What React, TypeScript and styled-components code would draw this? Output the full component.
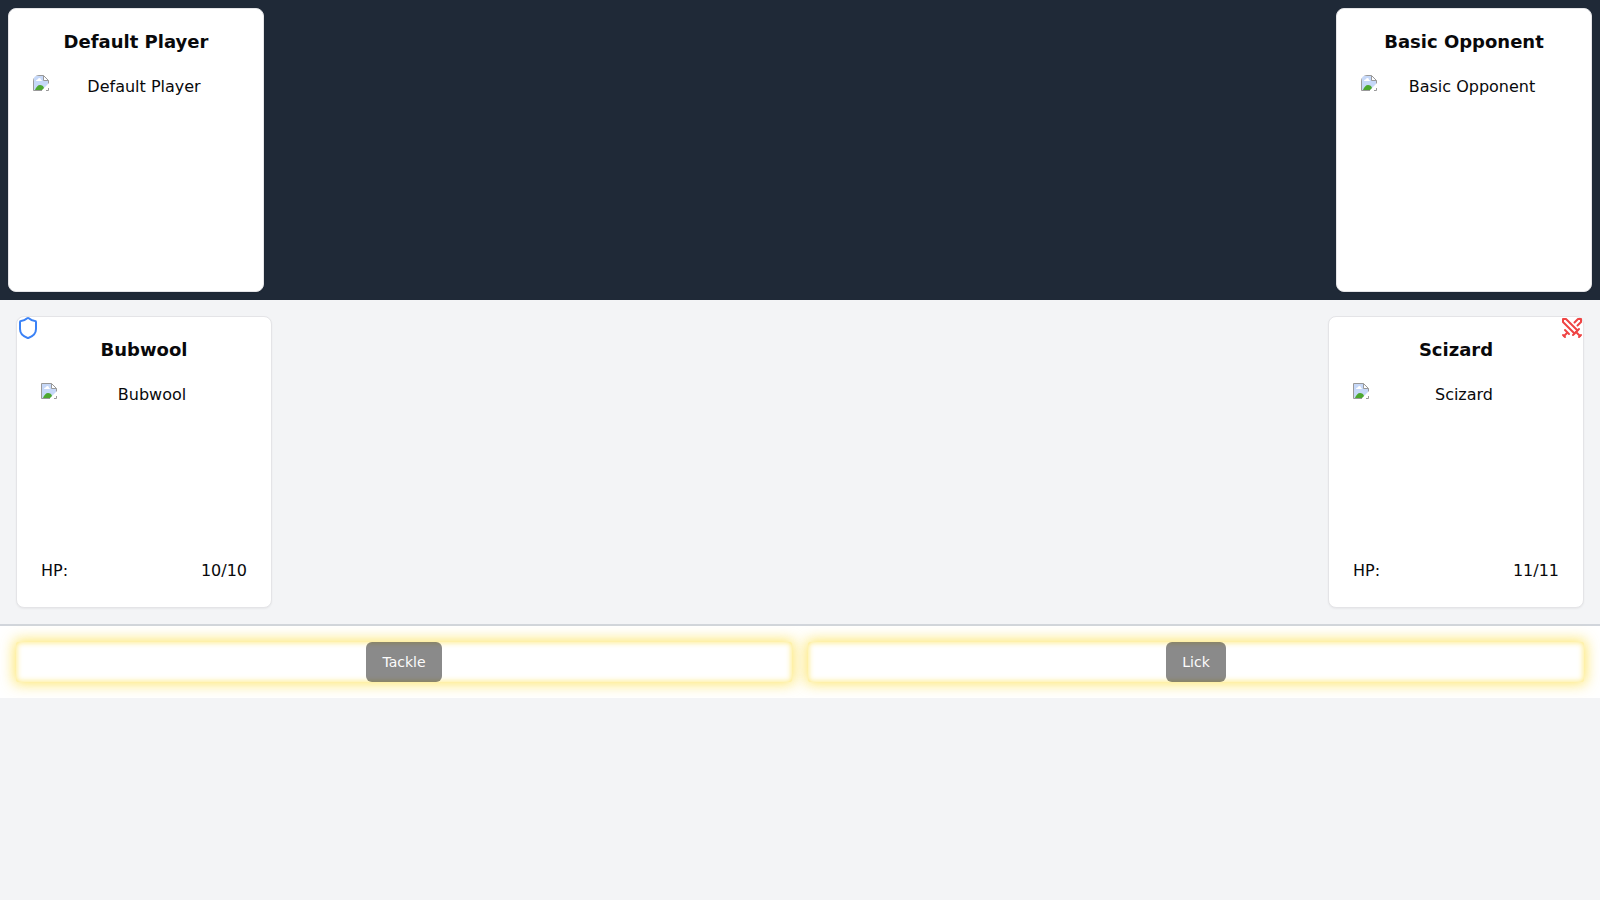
import React from "react";
import styled, { createGlobalStyle } from "styled-components";
import { Shield, Swords } from "lucide-react";

const GlobalStyle = createGlobalStyle`
  *, *::before, *::after { box-sizing: border-box; }
  body {
    margin: 0;
    background: #f3f4f6;
    color: #09090b;
    font: 16px/24px "DejaVu Sans", sans-serif;
  }
`;

const TrainerBar = styled.header`
  display: flex;
  justify-content: space-between;
  padding: 8px;
  background: #1f2937;
`;

const Arena = styled.main`
  display: flex;
  justify-content: space-between;
  padding: 16px;
  border-bottom: 2px solid #d1d5db;
`;

const Card = styled.article`
  width: 256px;
  padding: 24px;
  background: #fff;
  border: 1px solid #e4e4e7;
  border-radius: 8px;
  box-shadow: 0 1px 2px rgba(0, 0, 0, 0.05);
`;

const CardTitle = styled.h2`
  margin: 0 0 24px;
  font-size: 18px;
  line-height: 18px;
  font-weight: 700;
  text-align: center;
`;

const Portrait = styled.div<{ $height: number; $radius?: number }>`
  display: flex;
  height: ${(p) => p.$height}px;
  border-radius: ${(p) => p.$radius ?? 0}px;
  overflow: hidden;
`;

const PortraitLabel = styled.span`
  flex: 1;
  text-align: center;
`;

const StatRow = styled.div`
  display: flex;
  justify-content: space-between;
  margin-top: 16px;
`;

const CreatureSpot = styled.div`
  position: relative;
`;

const RoleBadge = styled.span<{ $side: "left" | "right"; $color: string }>`
  position: absolute;
  top: 0;
  ${(p) => p.$side}: 0;
  display: flex;
  color: ${(p) => p.$color};
`;

const MovePanel = styled.section`
  display: grid;
  grid-template-columns: 1fr 1fr;
  gap: 16px;
  padding: 16px;
  background: #fff;
`;

const MoveSlot = styled.div`
  display: flex;
  justify-content: center;
  border-radius: 2px;
  box-shadow: 0 0 14px 2px rgba(253, 224, 71, 0.8), inset 0 0 6px rgba(253, 224, 71, 0.8);
`;

const MoveButton = styled.button`
  height: 40px;
  padding: 0 16px;
  border: 0;
  border-radius: 6px;
  background: #171717;
  color: #fafafa;
  font: 14px/20px "DejaVu Sans", sans-serif;
  opacity: 0.5;
`;

function MissingPicture() {
  return (
    <svg width="16" height="16" viewBox="0 0 16 16" aria-hidden="true">
      <path d="M1 1h9.500L15 5.500V9l-6 6H1z" fill="#c6d8f8" />
      <path d="M3 6q0-1.500 1.500-1.500Q5 3 6.500 3T8 5q1 0 1 1z" fill="#fff" />
      <path d="M2 15c1-3 3-5 5-5s3.500 1 4 3l-2 2z" fill="#4ca82f" />
      <path d="M10.500 1v4.500H15z" fill="#fff" />
      <path d="M9 15.500H.5V.5h10l5 5v3M10.500.5v5h5M13 15.500h2.500V13" fill="none" stroke="#999" />
    </svg>
  );
}

function Picture({ name, height, radius }: { name: string; height: number; radius?: number }) {
  return (
    <Portrait $height={height} $radius={radius}>
      <MissingPicture />
      <PortraitLabel>{name}</PortraitLabel>
    </Portrait>
  );
}

function TrainerCard({ name }: { name: string }) {
  return (
    <Card>
      <CardTitle>{name}</CardTitle>
      <Picture name={name} height={192} radius={6} />
    </Card>
  );
}

function CreatureCard({ name, hp, badge }: { name: string; hp: string; badge: React.ReactNode }) {
  return (
    <CreatureSpot>
      <Card>
        <CardTitle>{name}</CardTitle>
        <Picture name={name} height={160} />
        <StatRow>
          <span>HP:</span>
          <span>{hp}</span>
        </StatRow>
      </Card>
      {badge}
    </CreatureSpot>
  );
}

export default function App() {
  return (
    <>
      <GlobalStyle />
      <TrainerBar>
        <TrainerCard name="Default Player" />
        <TrainerCard name="Basic Opponent" />
      </TrainerBar>
      <Arena>
        <CreatureCard
          name="Bubwool"
          hp="10/10"
          badge={<RoleBadge $side="left" $color="#3b82f6"><Shield size={24} /></RoleBadge>}
        />
        <CreatureCard
          name="Scizard"
          hp="11/11"
          badge={<RoleBadge $side="right" $color="#ef4444"><Swords size={24} /></RoleBadge>}
        />
      </Arena>
      <MovePanel>
        {["Tackle", "Lick"].map((move) => (
          <MoveSlot key={move}>
            <MoveButton type="button">{move}</MoveButton>
          </MoveSlot>
        ))}
      </MovePanel>
    </>
  );
}
